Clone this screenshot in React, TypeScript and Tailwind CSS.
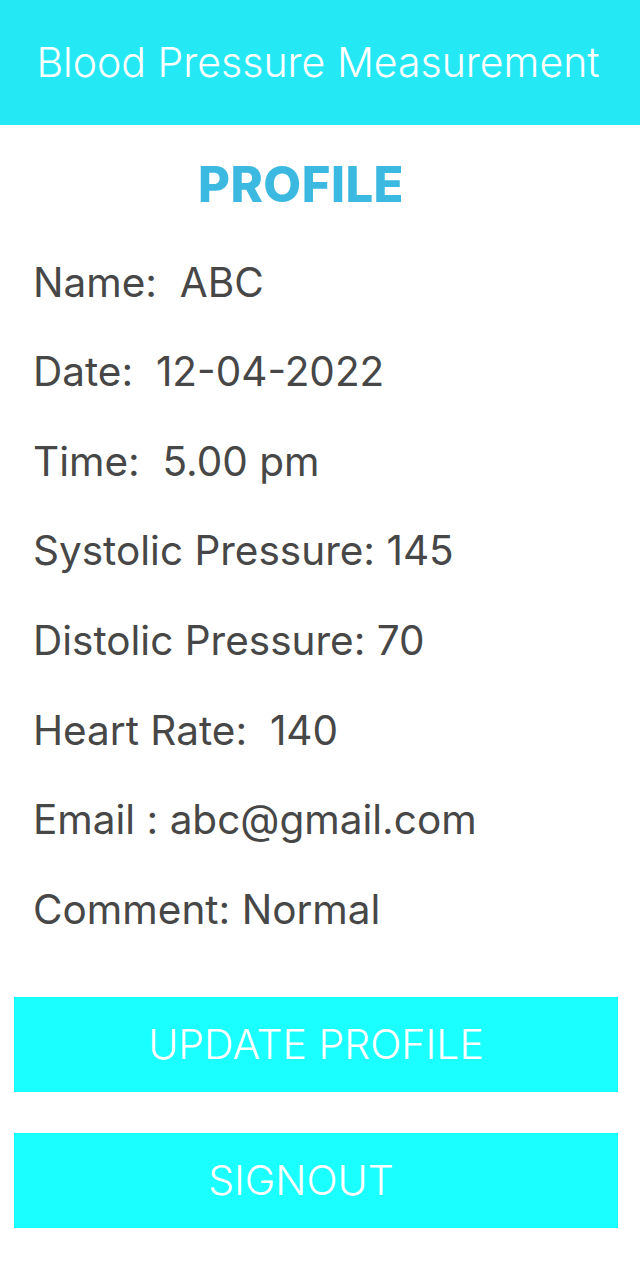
const rows = [
  "Name:  ABC",
  "Date:  12-04-2022",
  "Time:  5.00 pm",
  "Systolic Pressure: 145",
  "Distolic Pressure: 70",
  "Heart Rate:  140",
  "Email : abc@gmail.com",
  "Comment: Normal",
];

export default function App() {
  return (
    <div className="min-h-[1280px] bg-white" style={{ fontFamily: "Inter, 'Noto Sans', sans-serif" }}>
      <div className="h-[125px] bg-[#24e9f5] flex items-center justify-center pr-[4px]">
        <h1 className="text-[41px] font-light text-white leading-none">Blood Pressure Measurement</h1>
      </div>
      <div className="pt-[35px] pr-[38px] text-center">
        <h2 className="text-[49px] font-extrabold text-[#3cb9e1] leading-none tracking-[0.5px]">PROFILE</h2>
      </div>
      <div className="px-[33px] pt-[29px] flex flex-col">
        {rows.map((r) => (
          <div key={r} className="h-[89.6px] flex items-center text-[40.5px] text-[#474747] whitespace-pre leading-none">
            {r}
          </div>
        ))}
      </div>
      <div className="pl-[14px] pr-[22px] pt-[42px] flex flex-col gap-[41px]">
        <button className="h-[95px] bg-[#1affff] text-white text-[41px] font-light">UPDATE PROFILE</button>
        <button className="h-[95px] bg-[#1affff] text-white text-[41px] font-light pr-[30px]">SIGNOUT</button>
      </div>
    </div>
  );
}
